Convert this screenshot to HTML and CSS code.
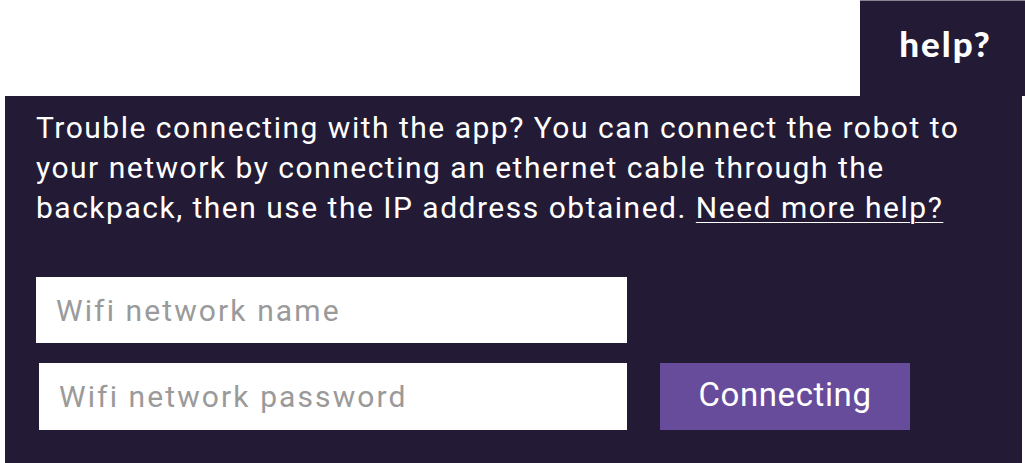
FILE: index.html
```html
<!DOCTYPE html>
<html>
<head>
<meta charset="utf-8">
<link rel="stylesheet" href="styles.css">
</head>
<body>
<div class="widget">
  <div class="help-tab">help?</div>
  <div class="panel">
    <p class="intro">Trouble connecting with the app? You can connect the robot to your network by connecting an ethernet cable through the backpack, then use the IP address obtained. <a class="more" href="#">Need more help?</a></p>
    <div class="form">
      <div class="row">
        <input class="field" type="text" placeholder="Wifi network name">
      </div>
      <div class="row">
        <input class="field field-pass" type="password" placeholder="Wifi network password">
        <button class="connect">Connecting</button>
      </div>
    </div>
  </div>
</div>
</body>
</html>
```
FILE: styles.css
```css
html, body {
  margin: 0;
  padding: 0;
  background: #ffffff;
}
body {
  width: 1025px;
  height: 463px;
  overflow: hidden;
  font-family: Roboto, "Liberation Sans", sans-serif;
}
.widget {
  display: flex;
  flex-direction: column;
  align-items: flex-end;
  width: 1025px;
}
.help-tab {
  width: 165px;
  height: 96px;
  box-sizing: border-box;
  background: #231b35;
  color: #ffffff;
  font-family: Lato, "DejaVu Sans", sans-serif;
  font-weight: 900;
  font-size: 35px;
  letter-spacing: 2px;
  display: flex;
  align-items: center;
  justify-content: center;
  padding-bottom: 12px;
  padding-left: 6px;
  border-top: 1px solid #8a8592;
}
.panel {
  align-self: flex-start;
  margin-left: 5px;
  width: 1017px;
  height: 367px;
  box-sizing: border-box;
  background: #231b35;
  padding: 12px 14px 0 31px;
}
.intro {
  margin: 0;
  color: #ffffff;
  font-size: 30px;
  line-height: 40px;
  letter-spacing: 1.5px;
}
.more {
  color: #ffffff;
  text-decoration: underline;
  text-underline-offset: 4px;
  text-decoration-thickness: 1px;
}
.form {
  display: flex;
  flex-direction: column;
  gap: 20px;
  margin-top: 49px;
}
.row {
  display: flex;
  align-items: stretch;
}
.field {
  width: 591px;
  height: 66px;
  box-sizing: border-box;
  border: none;
  outline: none;
  background: #ffffff;
  padding: 0 20px;
  font-family: Roboto, "Liberation Sans", sans-serif;
  font-size: 30px;
  letter-spacing: 2.1px;
  color: #333;
}
.field::placeholder {
  color: #9a9a9a;
}
.field-pass {
  margin-left: 3px;
  width: 588px;
  height: 67px;
}
.connect {
  margin-left: 33px;
  width: 250px;
  height: 67px;
  border: none;
  background: #674c9c;
  color: #ffffff;
  font-family: Roboto, "Liberation Sans", sans-serif;
  font-size: 33px;
  letter-spacing: 0.6px;
  padding: 0 0 4px 0;
}
```
